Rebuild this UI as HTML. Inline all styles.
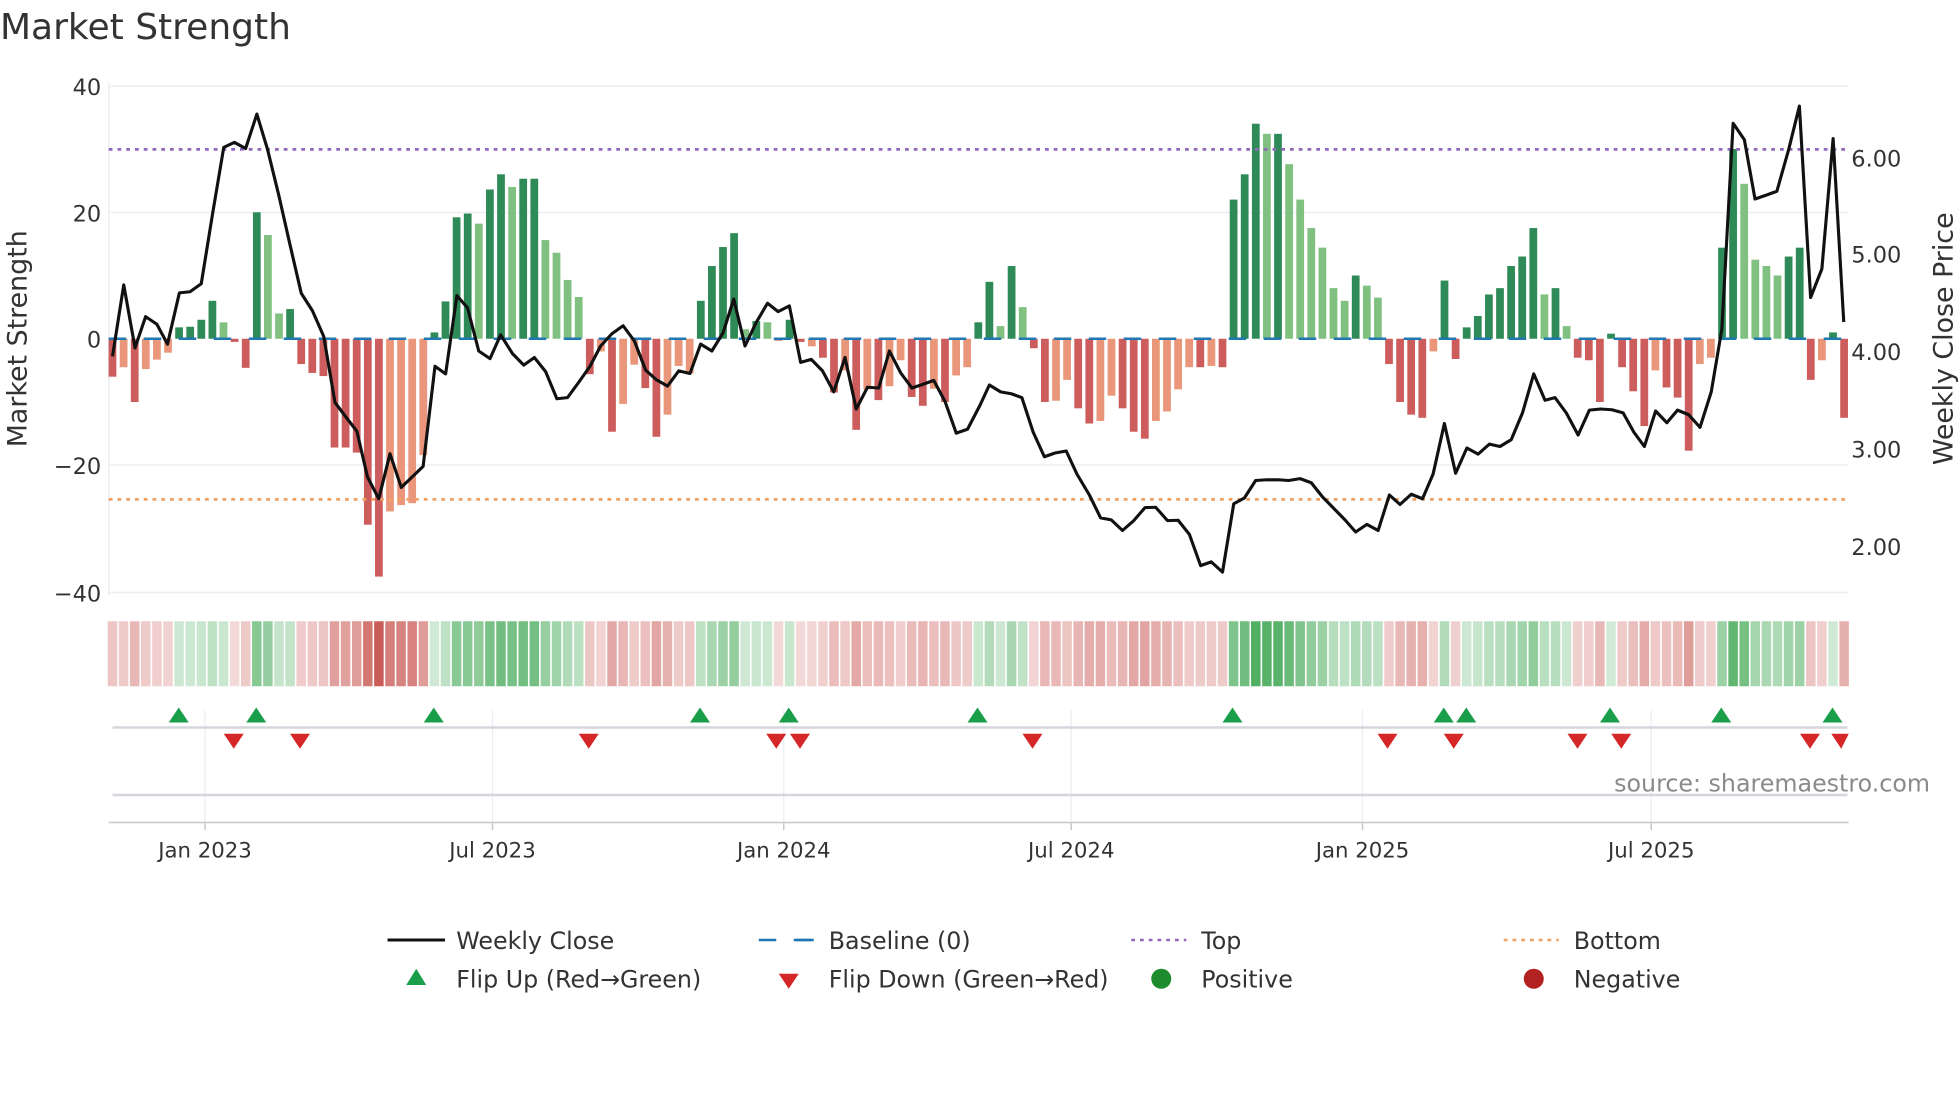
<!DOCTYPE html>
<html><head><meta charset="utf-8"><style>
html,body{margin:0;padding:0;background:#fff;}
svg{display:block;font-family:"DejaVu Sans","Liberation Sans",sans-serif;}
</style></head><body>
<svg id="s" width="1960" height="1102" viewBox="0 0 1568 881.6" xmlns="http://www.w3.org/2000/svg">
<rect width="1568" height="882" fill="#fff"/>
<text x="0" y="31" font-size="28.8" fill="#333">Market Strength</text>
<g stroke="#eceef1" stroke-width="1.2">
<line x1="87" y1="69" x2="1479" y2="69"/><line x1="87" y1="170" x2="1479" y2="170"/>
<line x1="87" y1="372" x2="1479" y2="372"/><line x1="87" y1="474" x2="1479" y2="474"/>
<line x1="87" y1="66" x2="87" y2="476"/>
</g>
<g font-size="18" fill="#333" text-anchor="end">
<text x="81" y="76">40</text><text x="81" y="177">20</text><text x="81" y="278">0</text>
<text x="81" y="379">−20</text><text x="81" y="481">−40</text>
</g>
<g font-size="18" fill="#333">
<text x="1481" y="133">6.00</text><text x="1481" y="210">5.00</text><text x="1481" y="288">4.00</text>
<text x="1481" y="366">3.00</text><text x="1481" y="444">2.00</text>
</g>
<text transform="translate(21,271) rotate(-90)" font-size="21.5" fill="#333" text-anchor="middle">Market Strength</text>
<text transform="translate(1562,271) rotate(-90)" font-size="21.5" fill="#333" text-anchor="middle">Weekly Close Price</text>
<g id="bars"></g>
<line x1="87" y1="271" x2="1479" y2="271" stroke="#1f77b4" stroke-width="2" stroke-dasharray="14,14"/>
<line x1="87" y1="119.5" x2="1479" y2="119.5" stroke="#9467bd" stroke-width="2.2" stroke-dasharray="3,4"/>
<line x1="87" y1="399.5" x2="1479" y2="399.5" stroke="#f0a060" stroke-width="2.2" stroke-dasharray="3,4"/>
<polyline id="price" fill="none" stroke="#111" stroke-width="2.5" stroke-linejoin="round"/>
<g id="heat"></g>
<g stroke="#eceef1" stroke-width="1">
<line x1="164" y1="568" x2="164" y2="658"/><line x1="394" y1="568" x2="394" y2="658"/>
<line x1="627" y1="568" x2="627" y2="658"/><line x1="857" y1="568" x2="857" y2="658"/>
<line x1="1090" y1="568" x2="1090" y2="658"/><line x1="1321" y1="568" x2="1321" y2="658"/>
</g>
<line x1="90" y1="582" x2="1478" y2="582" stroke="#d3d6dc" stroke-width="2"/>
<line x1="90" y1="636" x2="1478" y2="636" stroke="#d3d6dc" stroke-width="2"/>
<g id="marks"></g>
<text x="1544" y="633" font-size="19" fill="#8a8a8a" text-anchor="end">source: sharemaestro.com</text>
<line x1="87" y1="658" x2="1479" y2="658" stroke="#c8c8c8" stroke-width="1.2"/>
<g stroke="#c8c8c8" stroke-width="1.2">
<line x1="164" y1="658" x2="164" y2="664"/><line x1="394" y1="658" x2="394" y2="664"/>
<line x1="627" y1="658" x2="627" y2="664"/><line x1="857" y1="658" x2="857" y2="664"/>
<line x1="1090" y1="658" x2="1090" y2="664"/><line x1="1321" y1="658" x2="1321" y2="664"/>
</g>
<g font-size="17" fill="#333" text-anchor="middle">
<text x="164" y="686">Jan 2023</text><text x="394" y="686">Jul 2023</text><text x="627" y="686">Jan 2024</text>
<text x="857" y="686">Jul 2024</text><text x="1090" y="686">Jan 2025</text><text x="1321" y="686">Jul 2025</text>
</g>
<g font-size="19" fill="#333">
<line x1="310" y1="752" x2="356" y2="752" stroke="#111" stroke-width="2.4"/>
<text x="365" y="759">Weekly Close</text>
<line x1="607" y1="752" x2="651" y2="752" stroke="#1f77b4" stroke-width="2" stroke-dasharray="14,14"/>
<line x1="637" y1="752" x2="651" y2="752" stroke="#1f77b4" stroke-width="2"/>
<text x="663" y="759">Baseline (0)</text>
<line x1="905" y1="752" x2="949" y2="752" stroke="#9467bd" stroke-width="2" stroke-dasharray="3,4"/>
<text x="961" y="759">Top</text>
<line x1="1203" y1="752" x2="1247" y2="752" stroke="#f0a060" stroke-width="2" stroke-dasharray="3,4"/>
<text x="1259" y="759">Bottom</text>
<polygon points="333,775 341,788 325,788" fill="#1a9e4a"/>
<text x="365" y="790">Flip Up (Red→Green)</text>
<polygon points="623,779 639,779 631,791" fill="#d62728"/>
<text x="663" y="790">Flip Down (Green→Red)</text>
<circle cx="929" cy="783" r="8" fill="#1e8c2e"/>
<text x="961" y="790">Positive</text>
<circle cx="1227" cy="783" r="8" fill="#b22222"/>
<text x="1259" y="790">Negative</text>
</g>
</svg>
<script>
var NS="http://www.w3.org/2000/svg";
var D="-6,-4.5L,-10,-4.8L,-3.3L,-2.2L,1.8,1.9,3,6,2.6L,-0.5,-4.6,20,16.4L,4L,4.7,-4,-5.4,-5.9,-17.2,-17.2,-18,-29.4,-37.6,-27.3L,-26.3L,-26L,-18.4L,1,5.9,19.2,19.8,18.2L,23.6,26,24L,25.3,25.3,15.6L,13.6L,9.3L,6.6L,-5.6,-2L,-14.7,-10.3L,-4.1L,-7.8,-15.5,-12L,-4.3L,-5.5L,6,11.5,14.5,16.7,1.5L,2.8,2.6L,-0.3,3,-0.5,-1.2L,-3,-8.5,-5L,-14.4,-8L,-9.7,-7.5L,-3.4L,-9.2,-10.6,-7.9L,-10,-5.8L,-4.5L,2.6,9,2L,11.5,5L,-1.5,-10,-9.8L,-6.5L,-11,-13.4,-13L,-9L,-11,-14.7,-15.8,-13L,-11.5L,-8L,-4.5L,-4.5,-4.3L,-4.5,22,26,34,32.4L,32.4,27.6L,22L,17.5L,14.4L,8L,6L,10,8.4L,6.5L,-4,-10,-12,-12.5,-2L,9.2,-3.2,1.8,3.6,7,8,11.5,13,17.5,7L,8,2L,-3,-3.4,-10,0.8,-4.5,-8.3,-13.8,-5L,-7.7,-9.3,-17.7,-4L,-3L,14.4,30,24.5L,12.5L,11.5L,10L,13,14.4,-6.5,-3.4L,1,-12.5".split(",");
var bars=document.getElementById("bars"),heat=document.getElementById("heat");
D.forEach(function(s,i){
 var L=s.indexOf("L")>=0,v=parseFloat(s),x=90+i*8.88;
 var r=document.createElementNS(NS,"rect");
 var y0=271,y1=271-v*5.06;
 r.setAttribute("x",x-3.1);r.setAttribute("width",6.2);
 r.setAttribute("y",Math.min(y0,y1));r.setAttribute("height",Math.max(0.8,Math.abs(y1-y0)));
 r.setAttribute("fill",v>=0?(L?"#80c080":"#2e8b57"):(L?"#e9967a":"#cd5c5c"));
 bars.appendChild(r);
 var h=document.createElementNS(NS,"rect");
 h.setAttribute("x",x-3.8);h.setAttribute("width",7.6);h.setAttribute("y",497);h.setAttribute("height",52);
 var a=Math.min(1,0.22+Math.abs(v)/38*0.75);
 h.setAttribute("fill",v>=0?"rgba(60,165,80,"+a+")":"rgba(200,85,80,"+a+")");
 heat.appendChild(h);
});
var P1=[[180,932],[198,745],[216,910],[233,828],[251,848],[268,900],[287,766],[304,763],[322,742],[340,560],[358,385],[375,372],[393,388],[411,298],[428,390],[446,510],[464,640],[482,767],[500,813],[518,880],[536,1053],[553,1090],[571,1128],[588,1248],[606,1305],[624,1187],[642,1275],[660,1247],[677,1220],[696,958],[713,978],[731,773],[748,805],[766,918],[784,938],[801,876],[820,925],[838,955],[855,935],[873,972],[891,1043],[908,1040],[926,1000],[944,958],[961,905],[979,873],[997,852],[1015,892],[1033,968],[1050,993],[1068,1010],[1086,970],[1104,977],[1121,900],[1139,918],[1157,870],[1174,782],[1192,905],[1210,843],[1228,793],[1245,815],[1263,800],[1281,948],[1298,940],[1316,970],[1334,1025],[1352,935],[1370,1070],[1388,1013],[1406,1015],[1423,918],[1441,975],[1459,1015],[1477,1005],[1494,995],[1512,1050],[1530,1133],[1548,1123]];
var P2=[[0,1060],[15,1007],[33,1025],[50,1030],[67,1040],[85,1130],[103,1195],[120,1185],[138,1180],[155,1240],[175,1295],[193,1355],[210,1360],[228,1388],[246,1362],[264,1328],[281,1327],[300,1362],[317,1361],[335,1398],[353,1480],[370,1470],[388,1497],[406,1318],[423,1303],[441,1257],[459,1255],[477,1255],[494,1257],[512,1252],[530,1263],[548,1300],[566,1330],[584,1360],[601,1392],[619,1372],[637,1388],[655,1295],[672,1320],[690,1293],[708,1305],[725,1240],[743,1108],[761,1238],[779,1172],[797,1188],[815,1162],[832,1168],[850,1150],[868,1080],[886,978],[904,1047],[920,1040],[938,1080],[957,1138],[975,1073],[993,1070],[1011,1072],[1029,1080],[1046,1130],[1063,1168],[1081,1075],[1099,1106],[1116,1073],[1134,1085],[1152,1118],[1170,1025],[1187,860],[1205,322],[1223,365],[1240,520],[1258,510],[1275,500],[1294,390],[1311,277],[1329,778],[1347,703],[1365,362],[1382,842]];
function Y(z){return (69+(z-225)*0.3056).toFixed(1);}
var pts=P1.map(function(p){return (p[0]/2).toFixed(1)+","+Y(p[1]);}).concat(P2.map(function(p){return (784+p[0]/2).toFixed(1)+","+Y(p[1]);}));
document.getElementById("price").setAttribute("points",pts.join(" "));
var marks=document.getElementById("marks"),up=[143,205,347,560,631,782,986,1155,1173,1288,1377,1466],dn=[187,240,471,621,640,826,1110,1163,1262,1297,1448,1473];
up.forEach(function(x){var p=document.createElementNS(NS,"polygon");p.setAttribute("points",x+",566 "+(x+8)+",578 "+(x-8)+",578");p.setAttribute("fill","#1a9e4a");marks.appendChild(p);});
dn.forEach(function(x){var p=document.createElementNS(NS,"polygon");var xr=Math.min(x+8,1479);p.setAttribute("points",(x-8)+",587 "+xr+",587 "+x+",599");p.setAttribute("fill","#d62728");marks.appendChild(p);});
</script>
</body></html>
